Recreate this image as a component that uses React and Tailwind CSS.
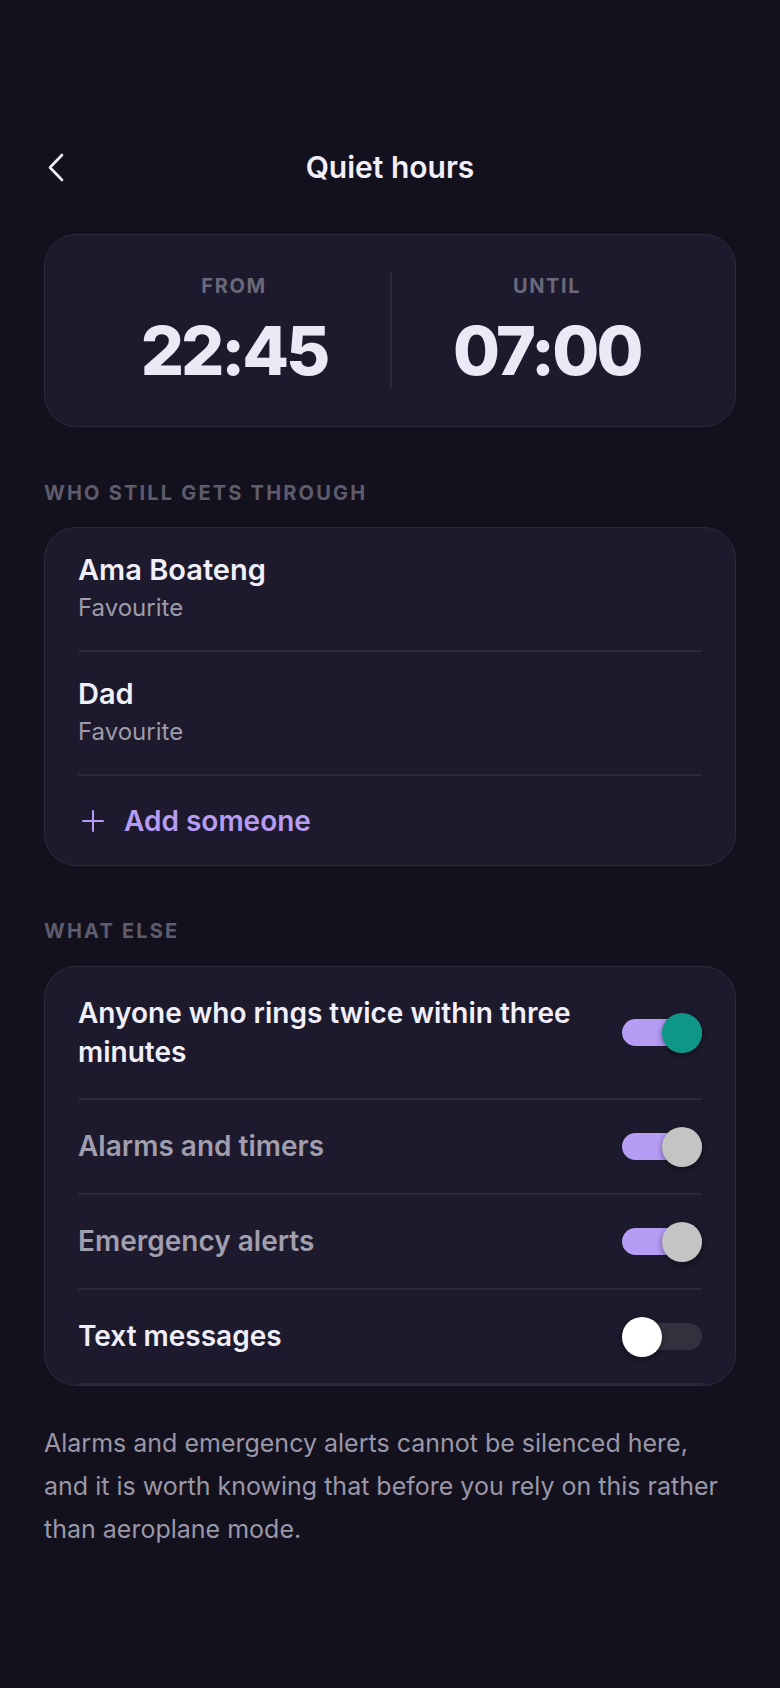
import React from 'react';

const font = { fontFamily: 'Inter, "Noto Sans", sans-serif' };

// Toggle switch — track with knob sitting flush to one end
const Toggle = ({ on, knob }) => (
    <div className="relative w-[80px] h-[40px] shrink-0 flex items-center">
        <div className={`w-[80px] h-[27px] rounded-full ${on ? 'bg-[#b69cf5]' : 'bg-[#34313f]'}`}></div>
        <div
            className={`absolute top-0 w-[40px] h-[40px] rounded-full shadow-[0_2px_6px_rgba(0,0,0,0.45)] ${on ? 'right-0' : 'left-0'} ${knob}`}
        ></div>
    </div>
);

const Contact = ({ name }) => (
    <div className="py-[24px] border-b-2 border-[#2a2839]">
        <div className="text-[29px] leading-[36px] font-semibold text-[#f1effa]">{name}</div>
        <div className="mt-[2px] text-[24px] leading-[36px] text-[#9e9bab]">Favourite</div>
    </div>
);

const SettingRow = ({ label, dim, on, knob }) => (
    <div className="flex items-center justify-between gap-6 py-[26.5px] border-b-2 border-[#2a2839]">
        <div className={`text-[28px] leading-[39px] font-semibold ${dim ? 'text-[#a19eae]' : 'text-[#f1effa]'}`}>
            {label}
        </div>
        <Toggle on={on} knob={knob} />
    </div>
);

export default function App() {
    return (
        <div className="min-h-screen bg-[#13111d] px-[44px] pt-[139px] pb-24" style={font}>
            {/* Header */}
            <div className="relative flex items-center justify-center h-[56px]">
                <button className="absolute left-[3px] top-[14px]">
                    <svg width="18" height="29" viewBox="0 0 18 29" fill="none">
                        <polyline
                            points="15,2 3,14.5 15,27"
                            stroke="#f1effa"
                            strokeWidth="2.6"
                            strokeLinecap="round"
                            strokeLinejoin="round"
                        />
                    </svg>
                </button>
                <h1 className="text-[30px] font-semibold text-[#f1effa]">Quiet hours</h1>
            </div>

            {/* Time range */}
            <div className="mt-[39px] rounded-[32px] border border-[#2d2a3c] bg-[#1c1a2c] px-[33px] py-[37px] grid grid-cols-2">
                <div className="flex flex-col items-center">
                    <div className="text-[20px] leading-[28px] font-bold tracking-[0.08em] text-[#6b6879]">FROM</div>
                    <div className="mt-[12px] text-[68px] leading-[77px] font-extrabold tracking-[-0.045em] text-[#ebe9f6]">22:45</div>
                </div>
                <div className="flex flex-col items-center border-l-2 border-[#2a2839]">
                    <div className="text-[20px] leading-[28px] font-bold tracking-[0.08em] text-[#6b6879]">UNTIL</div>
                    <div className="mt-[12px] text-[68px] leading-[77px] font-extrabold tracking-[-0.04em] text-[#ebe9f6]">07:00</div>
                </div>
            </div>

            {/* Who still gets through */}
            <div className="mt-[52px] mb-[20px] text-[20px] leading-[28px] font-bold tracking-[0.11em] text-[#5f5c6d]">
                WHO STILL GETS THROUGH
            </div>
            <div className="rounded-[32px] border border-[#2d2a3c] bg-[#1c1a2c] px-[33px]">
                <Contact name="Ama Boateng" />
                <Contact name="Dad" />
                <div className="flex items-center gap-[19px] py-[26.5px]">
                    <svg className="ml-[3px]" width="24" height="24" viewBox="0 0 24 24" fill="none">
                        <path d="M12 2v20M2 12h20" stroke="#b69cf5" strokeWidth="2" strokeLinecap="round" />
                    </svg>
                    <span className="text-[28px] leading-[36px] font-semibold text-[#b69cf5]">Add someone</span>
                </div>
            </div>

            {/* What else */}
            <div className="mt-[51px] mb-[21px] text-[20px] leading-[28px] font-bold tracking-[0.11em] text-[#5f5c6d]">
                WHAT ELSE
            </div>
            <div className="rounded-[32px] border border-[#2d2a3c] bg-[#1c1a2c] px-[33px] overflow-hidden">
                <SettingRow label="Anyone who rings twice within three minutes" on knob="bg-[#0e9686]" />
                <SettingRow label="Alarms and timers" dim on knob="bg-[#c4c4c4]" />
                <SettingRow label="Emergency alerts" dim on knob="bg-[#c4c4c4]" />
                <SettingRow label="Text messages" knob="bg-white" />
            </div>

            {/* Footnote */}
            <p className="mt-[36px] text-[25px] leading-[43px] text-[#9a97a8]">
                Alarms and emergency alerts cannot be silenced here, and it is worth knowing that before you rely on this rather than aeroplane mode.
            </p>
        </div>
    );
}
